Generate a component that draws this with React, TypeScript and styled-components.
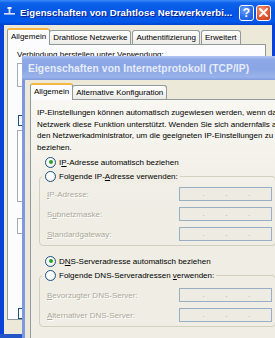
import React from "react";
import styled, { createGlobalStyle } from "styled-components";

const Global = createGlobalStyle`
  html, body { margin: 0; padding: 0; }
  body {
    width: 275px;
    height: 338px;
    overflow: hidden;
    background: #2456C8;
    font-family: "Liberation Sans", Arial, sans-serif;
  }
`;

const Desktop = styled.div`
  position: relative;
  width: 275px;
  height: 338px;
  overflow: hidden;
`;

const Window = styled.div<{ $left: number; $top: number; $width: number; $height: number; $inactive?: boolean }>`
  position: absolute;
  left: ${(p) => p.$left}px;
  top: ${(p) => p.$top}px;
  width: ${(p) => p.$width}px;
  height: ${(p) => p.$height}px;
  display: flex;
  flex-direction: column;
  background: ${(p) => (p.$inactive ? "#7D98E0" : "#0842D8")};
  padding: 0 ${(p) => (p.$inactive ? 3 : 4)}px ${(p) => (p.$inactive ? 3 : 4)}px;
  box-sizing: border-box;
`;

const TitleBar = styled.div<{ $inactive?: boolean; $height: number }>`
  height: ${(p) => p.$height}px;
  flex: none;
  display: flex;
  align-items: center;
  gap: 5px;
  margin: 0 -${(p) => (p.$inactive ? 3 : 4)}px;
  padding: 0 5px 0 ${(p) => (p.$inactive ? 6 : 4)}px;
  background: ${(p) =>
    p.$inactive
      ? "linear-gradient(#B4C8F4 0%, #8EA9E6 14%, #8AA5E5 55%, #9AB3EA 88%, #7F99DE 100%)"
      : "linear-gradient(#3C8CF8 0%, #0E62EA 12%, #0055E5 50%, #0159EC 86%, #0044CC 100%)"};
`;

const TitleText = styled.span<{ $inactive?: boolean }>`
  flex: 1;
  font-weight: bold;
  font-size: ${(p) => (p.$inactive ? 10.2 : 9.6)}px;
  color: ${(p) => (p.$inactive ? "#E6EDFB" : "#FFFFFF")};
  text-shadow: ${(p) => (p.$inactive ? "none" : "1px 1px 0 #0A1E8C")};
  white-space: nowrap;
  overflow: hidden;
  letter-spacing: 0.1px;
`;

const CaptionButton = styled.div<{ $close?: boolean }>`
  width: 13px;
  height: 14px;
  flex: none;
  border: 1px solid #FFFFFF;
  border-radius: 3px;
  display: flex;
  align-items: center;
  justify-content: center;
  color: #FFFFFF;
  font-weight: bold;
  font-size: 12px;
  background: ${(p) =>
    p.$close
      ? "radial-gradient(circle at 35% 30%, #F29A7C 0%, #E2572F 55%, #C5401C 100%)"
      : "radial-gradient(circle at 35% 30%, #6FA1FA 0%, #2A6DEB 55%, #1A55D6 100%)"};
`;

const CaptionGroup = styled.div`
  display: flex;
  gap: 2px;
`;

const Body = styled.div<{ $pad: number }>`
  flex: 1;
  background: #ECE9D8;
  padding: 3px 0 0 ${(p) => p.$pad}px;
  display: flex;
  flex-direction: column;
`;

const TabStrip = styled.div`
  display: flex;
  align-items: flex-end;
  height: 16px;
  padding-left: 2px;
  position: relative;
  z-index: 1;
`;

const Tab = styled.div<{ $selected?: boolean }>`
  height: ${(p) => (p.$selected ? 15 : 13)}px;
  padding: 0 3px;
  margin: ${(p) => (p.$selected ? "0 -2px -1px -2px" : "0 0 0 1px")};
  border: 1px solid #919B9C;
  border-bottom: none;
  border-top: ${(p) => (p.$selected ? "2px solid #F7B744" : "1px solid #919B9C")};
  border-radius: 3px 3px 0 0;
  background: ${(p) => (p.$selected ? "#FCFCFE" : "linear-gradient(#FFFFFF, #ECEBE6)")};
  font-size: 8px;
  line-height: 13px;
  color: #000000;
  white-space: nowrap;
  position: relative;
  z-index: ${(p) => (p.$selected ? 2 : 1)};
`;

const Panel = styled.div<{ $tint?: boolean; $right: number; $bottom?: number }>`
  flex: 1;
  margin: 0 ${(p) => p.$right}px ${(p) => p.$bottom ?? 0}px 0;
  border: 1px solid #919B9C;
  background: ${(p) => (p.$tint ? "linear-gradient(#F8F7F2, #EFEDE4 40%)" : "#FCFCFE")};
  display: flex;
  flex-direction: column;
  font-size: 8px;
  color: #000000;
`;

/* back window panel parts, mostly hidden by the front dialog */
const BackPanelInner = styled.div`
  padding: 5px 0 0 9px;
  display: flex;
  flex-direction: column;
  gap: 4px;
`;

const FieldBox = styled.div<{ $h: number }>`
  height: ${(p) => p.$h}px;
  border: 1px solid #A5ACB2;
  background: #FFFFFF;
  margin-right: 8px;
`;

const Checkline = styled.div`
  width: 4px;
  height: 9px;
  border: 1px solid #1C5180;
  border-right: none;
  margin: 6px 0 0 1px;
`;

const Line = styled.div`
  white-space: nowrap;
`;

/* front window panel */
const FrontPanelInner = styled.div`
  padding: 7px 0 0 6px;
  display: flex;
  flex-direction: column;
`;

const Paragraph = styled.div`
  line-height: 11.5px;
  white-space: nowrap;
  margin-bottom: 2px;
`;

const RadioRow = styled.div<{ $legend?: boolean }>`
  display: flex;
  align-items: center;
  gap: 3px;
  height: 14px;
  padding-left: 8px;
  white-space: nowrap;
  ${(p) =>
    p.$legend &&
    `
    align-self: flex-start;
    position: relative;
    z-index: 1;
    margin-bottom: -7px;
    padding-right: 2px;
    background: #EFEDE4;
    margin-left: 5px;
    padding-left: 3px;
  `}
`;

const RadioCircle = styled.span<{ $checked?: boolean }>`
  width: 9px;
  height: 9px;
  border-radius: 50%;
  border: 1px solid #1C5180;
  background: radial-gradient(circle at 40% 40%, #FFFFFF 40%, #DCD8CB 100%);
  display: flex;
  align-items: center;
  justify-content: center;
  flex: none;
  &::after {
    content: "";
    width: 4px;
    height: 4px;
    border-radius: 50%;
    background: ${(p) => (p.$checked ? "#2AA12A" : "transparent")};
  }
`;

const Group = styled.div<{ $top: number }>`
  margin: 0 7px 0 2px;
  border: 1px solid #D0D0BF;
  border-radius: 4px;
  padding: ${(p) => p.$top}px 3px 4px 7px;
  display: grid;
  grid-template-columns: 1fr 93px;
  row-gap: 6px;
  align-items: center;
`;

const FieldLabel = styled.span`
  color: #ACA899;
  text-shadow: 1px 1px 0 #FFFFFF;
  white-space: nowrap;
`;

const IpBox = styled.div`
  height: 12px;
  border: 1px solid #98AEC4;
  background: #EEECE2;
  display: grid;
  grid-template-columns: repeat(4, 1fr);
  align-items: center;
`;

const IpDot = styled.span`
  text-align: right;
  color: #ACA899;
  font-size: 8px;
  line-height: 12px;
  transform: translateX(2px);
`;

const U = styled.span`
  text-decoration: underline;
`;

const Spacer = styled.div<{ $h: number }>`
  height: ${(p) => p.$h}px;
  flex: none;
`;

const NetIcon = () => (
  <svg width="11" height="11" viewBox="0 0 11 11">
    <rect x="0" y="6" width="11" height="1.6" fill="#D9E2F5" />
    <rect x="4.6" y="1" width="1.8" height="6" fill="#D9E2F5" />
    <rect x="3.5" y="0" width="4" height="2" fill="#F1F4FB" />
  </svg>
);

const CloseGlyph = () => (
  <svg width="9" height="9" viewBox="0 0 9 9">
    <path d="M1 1 L8 8 M8 1 L1 8" stroke="#FFFFFF" strokeWidth="1.8" strokeLinecap="round" />
  </svg>
);

const IpField = () => (
  <IpBox>
    <IpDot>.</IpDot>
    <IpDot>.</IpDot>
    <IpDot>.</IpDot>
    <span />
  </IpBox>
);

export default function App() {
  return (
    <>
      <Global />
      <Desktop>
        <Window $left={0} $top={0} $width={276} $height={334}>
          <TitleBar $height={25}>
            <NetIcon />
            <TitleText>Eigenschaften von Drahtlose Netzwerkverbi...</TitleText>
            <CaptionGroup>
              <CaptionButton>?</CaptionButton>
              <CaptionButton $close>
                <CloseGlyph />
              </CaptionButton>
            </CaptionGroup>
          </TitleBar>
          <Body $pad={3}>
            <TabStrip>
              <Tab $selected>Allgemein</Tab>
              <Tab>Drahtlose Netzwerke</Tab>
              <Tab>Authentifizierung</Tab>
              <Tab>Erweitert</Tab>
            </TabStrip>
            <Panel $right={6} $bottom={14}>
              <BackPanelInner>
                <Line>Verbindung herstellen unter Verwendung:</Line>
                <FieldBox $h={22} />
                <Spacer $h={14} />
                <Checkline />
                <FieldBox $h={70} />
                <Spacer $h={8} />
                <FieldBox $h={14} />
                <Spacer $h={60} />
                <Checkline />
              </BackPanelInner>
            </Panel>
          </Body>
        </Window>

        <Window $left={22} $top={56} $width={270} $height={320} $inactive>
          <TitleBar $inactive $height={24}>
            <TitleText $inactive>Eigenschaften von Internetprotokoll (TCP/IP)</TitleText>
          </TitleBar>
          <Body $pad={5}>
            <TabStrip>
              <Tab $selected>Allgemein</Tab>
              <Tab>Alternative Konfiguration</Tab>
            </TabStrip>
            <Panel $tint $right={5}>
              <FrontPanelInner>
                <Paragraph>
                  IP-Einstellungen können automatisch zugewiesen werden, wenn das
                  <br />
                  Netzwerk diese Funktion unterstützt. Wenden Sie sich andernfalls an
                  <br />
                  den Netzwerkadministrator, um die geeigneten IP-Einstellungen zu
                  <br />
                  beziehen.
                </Paragraph>
                <RadioRow>
                  <RadioCircle $checked />
                  <span>
                    I<U>P</U>-Adresse automatisch beziehen
                  </span>
                </RadioRow>
                <RadioRow $legend>
                  <RadioCircle />
                  <span>
                    Folgende IP-<U>A</U>dresse verwenden:
                  </span>
                </RadioRow>
                <Group $top={10}>
                  <FieldLabel>
                    <U>I</U>P-Adresse:
                  </FieldLabel>
                  <IpField />
                  <FieldLabel>
                    S<U>u</U>bnetzmaske:
                  </FieldLabel>
                  <IpField />
                  <FieldLabel>
                    <U>S</U>tandardgateway:
                  </FieldLabel>
                  <IpField />
                </Group>
                <Spacer $h={8} />
                <RadioRow>
                  <RadioCircle $checked />
                  <span>
                    D<U>N</U>S-Serveradresse automatisch beziehen
                  </span>
                </RadioRow>
                <RadioRow $legend>
                  <RadioCircle />
                  <span>
                    Folgende DNS-Serveradressen <U>v</U>erwenden:
                  </span>
                </RadioRow>
                <Group $top={12}>
                  <FieldLabel>
                    <U>B</U>evorzugter DNS-Server:
                  </FieldLabel>
                  <IpField />
                  <FieldLabel>
                    <U>A</U>lternativer DNS-Server:
                  </FieldLabel>
                  <IpField />
                </Group>
              </FrontPanelInner>
            </Panel>
          </Body>
        </Window>
      </Desktop>
    </>
  );
}
